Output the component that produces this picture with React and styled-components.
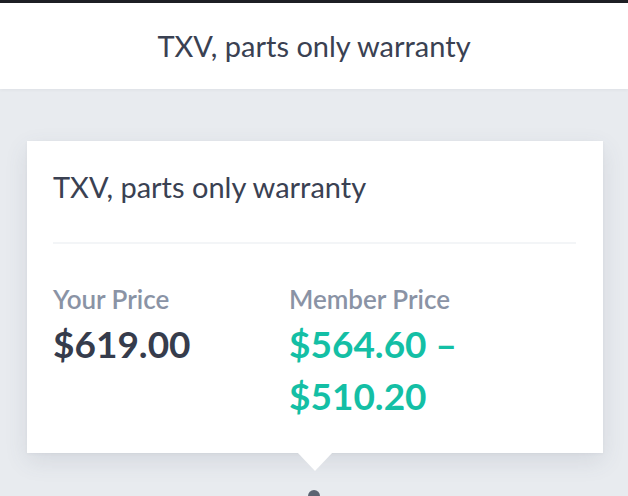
import React from "react";
import styled, { createGlobalStyle } from "styled-components";

const Global = createGlobalStyle`
  html, body { margin: 0; padding: 0; }
  body {
    background: #e8ebef;
    font-family: Lato, "Liberation Sans", sans-serif;
    -webkit-font-smoothing: antialiased;
  }
`;

const Page = styled.div`
  width: 628px;
  height: 496px;
  overflow: hidden;
  display: flex;
  flex-direction: column;
  background: #e8ebef;
  & > * { flex: none; }
`;

const TopEdge = styled.div`
  height: 3px;
  background: #1d1f24;
`;

const Header = styled.header`
  height: 86px;
  background: #ffffff;
  display: flex;
  align-items: center;
  justify-content: center;
  font-size: 29px;
  color: #3a4152;
  box-shadow: 0 1px 3px rgba(60, 70, 90, 0.06);
  padding-bottom: 2px;
  box-sizing: border-box;
`;

const Stage = styled.main`
  padding: 52px 25px 0 27px;
  display: flex;
  flex-direction: column;
  align-items: center;
`;

const Card = styled.section`
  position: relative;
  width: 100%;
  box-sizing: border-box;
  background: #ffffff;
  padding: 0 27px 0 26px;
  box-shadow: 0 8px 22px rgba(70, 85, 105, 0.12), 0 1px 3px rgba(70, 85, 105, 0.05);
  &::after {
    content: "";
    position: absolute;
    left: 50%;
    bottom: -18px;
    margin-left: -18px;
    border-left: 18px solid transparent;
    border-right: 18px solid transparent;
    border-top: 19px solid #ffffff;
  }
`;

const Title = styled.h2`
  margin: 0;
  padding: 28px 0 37px;
  font-size: 29px;
  font-weight: 400;
  line-height: 36px;
  color: #3a4152;
  border-bottom: 2px solid #f3f5f7;
`;

const Prices = styled.div`
  display: grid;
  grid-template-columns: 236px 1fr;
  padding: 40px 0 31px;
`;

const PriceCol = styled.div`
  display: flex;
  flex-direction: column;
  gap: 4px;
`;

const Label = styled.div`
  font-size: 26px;
  font-weight: 600;
  line-height: 30px;
  color: #8a93a5;
`;

const Amount = styled.div`
  font-size: 37px;
  font-weight: 700;
  line-height: 52px;
  color: ${(p) => (p.$member ? "#14bfa5" : "#363c4c")};
`;

const Dot = styled.div`
  flex: none;
  width: 12px;
  height: 12px;
  border-radius: 50%;
  background: #5c6472;
  margin-top: 37px;
  margin-left: -2px;
`;

export default function App() {
  return (
    <>
      <Global />
      <Page>
        <TopEdge />
        <Header>TXV, parts only warranty</Header>
        <Stage>
          <Card>
            <Title>TXV, parts only warranty</Title>
            <Prices>
              <PriceCol>
                <Label>Your Price</Label>
                <Amount>$619.00</Amount>
              </PriceCol>
              <PriceCol>
                <Label>Member Price</Label>
                <Amount $member>
                  $564.60 –<br />
                  $510.20
                </Amount>
              </PriceCol>
            </Prices>
          </Card>
          <Dot />
        </Stage>
      </Page>
    </>
  );
}
